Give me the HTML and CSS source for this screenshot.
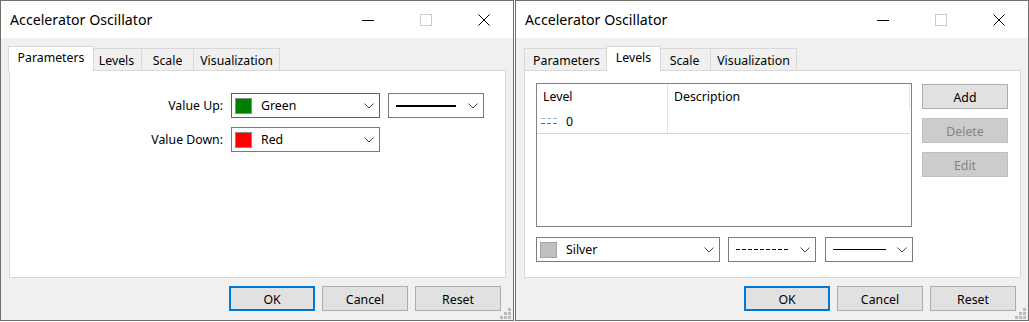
FILE: index.html
```html
<!DOCTYPE html>
<html>
<head>
<meta charset="utf-8">
<link rel="stylesheet" href="styles.css">
</head>
<body>
<div class="screen">
  <div class="dialog">
    <div class="titlebar">
      <span class="title">Accelerator Oscillator</span>
      <div class="caption">
        <span class="cbtn"><svg width="12" height="12" viewBox="0 0 12 12"><line x1="0" y1="6.5" x2="12" y2="6.5" stroke="#000" stroke-width="1"/></svg></span>
        <span class="cbtn"><svg width="12" height="12" viewBox="0 0 12 12"><rect x="0.5" y="0.5" width="11" height="11" fill="none" stroke="#cccccc" stroke-width="1"/></svg></span>
        <span class="cbtn"><svg width="12" height="12" viewBox="0 0 12 12"><path d="M0.5 0.5 L11.5 11.5 M11.5 0.5 L0.5 11.5" stroke="#000" stroke-width="1" fill="none"/></svg></span>
      </div>
    </div>
    <div class="body">
      <div class="tabs">
        <div class="tab t-params first active">Parameters</div>
        <div class="tab t-levels">Levels</div>
        <div class="tab t-scale">Scale</div>
        <div class="tab t-vis">Visualization</div>
      </div>
      <div class="panel">
        <div class="params">
          <label class="lbl">Value Up:</label>
          <div class="combo focus color-combo">
            <span class="swatch sw-green"></span>
            <span class="ctext">Green</span>
            <svg class="chev" width="10" height="6" viewBox="0 0 10 6"><polyline points="0.5,0.5 5,5 9.5,0.5" fill="none" stroke="#444" stroke-width="1"/></svg>
          </div>
          <div class="combo line-combo">
            <span class="line thick"></span>
            <svg class="chev" width="10" height="6" viewBox="0 0 10 6"><polyline points="0.5,0.5 5,5 9.5,0.5" fill="none" stroke="#444" stroke-width="1"/></svg>
          </div>
          <label class="lbl">Value Down:</label>
          <div class="combo color-combo">
            <span class="swatch sw-red"></span>
            <span class="ctext">Red</span>
            <svg class="chev" width="10" height="6" viewBox="0 0 10 6"><polyline points="0.5,0.5 5,5 9.5,0.5" fill="none" stroke="#444" stroke-width="1"/></svg>
          </div>
        </div>
      </div>
      <div class="footer">
        <button class="btn default">OK</button>
        <button class="btn">Cancel</button>
        <button class="btn">Reset</button>
      </div>
    </div>
    <svg class="grip" width="11" height="11" viewBox="0 0 11 11"><g fill="#bcbcbc"><rect x="8" y="0" width="3" height="3"/><rect x="4" y="4" width="3" height="3"/><rect x="8" y="4" width="3" height="3"/><rect x="0" y="8" width="3" height="3"/><rect x="4" y="8" width="3" height="3"/><rect x="8" y="8" width="3" height="3"/></g></svg>
  </div>

  <div class="dialog">
    <div class="titlebar">
      <span class="title">Accelerator Oscillator</span>
      <div class="caption">
        <span class="cbtn"><svg width="12" height="12" viewBox="0 0 12 12"><line x1="0" y1="6.5" x2="12" y2="6.5" stroke="#000" stroke-width="1"/></svg></span>
        <span class="cbtn"><svg width="12" height="12" viewBox="0 0 12 12"><rect x="0.5" y="0.5" width="11" height="11" fill="none" stroke="#cccccc" stroke-width="1"/></svg></span>
        <span class="cbtn"><svg width="12" height="12" viewBox="0 0 12 12"><path d="M0.5 0.5 L11.5 11.5 M11.5 0.5 L0.5 11.5" stroke="#000" stroke-width="1" fill="none"/></svg></span>
      </div>
    </div>
    <div class="body">
      <div class="tabs">
        <div class="tab t-params first">Parameters</div>
        <div class="tab t-levels active">Levels</div>
        <div class="tab t-scale">Scale</div>
        <div class="tab t-vis">Visualization</div>
      </div>
      <div class="panel levels">
        <div class="lv-top">
          <div class="list">
            <div class="grid">
              <div class="col col1">
                <div class="hcell">Level</div>
                <div class="rcell"><svg class="lvicon" width="17" height="8" viewBox="0 0 17 8"><g fill="#8dbbe8"><rect x="0" y="1" width="4" height="1"/><rect x="6" y="1" width="4" height="1"/><rect x="12" y="1" width="4" height="1"/></g><g fill="#2b7cd3"><rect x="0" y="6" width="4" height="1"/><rect x="6" y="6" width="4" height="1"/><rect x="12" y="6" width="4" height="1"/></g></svg><span class="lvval">0</span></div>
              </div>
              <div class="col col2">
                <div class="hcell hlast">Description</div>
                <div class="rcell"></div>
              </div>
            </div>
          </div>
          <div class="side">
            <button class="btn">Add</button>
            <button class="btn disabled">Delete</button>
            <button class="btn disabled">Edit</button>
          </div>
        </div>
        <div class="lv-bottom">
          <div class="combo color-combo silver-combo">
            <span class="swatch sw-silver"></span>
            <span class="ctext">Silver</span>
            <svg class="chev" width="10" height="6" viewBox="0 0 10 6"><polyline points="0.5,0.5 5,5 9.5,0.5" fill="none" stroke="#444" stroke-width="1"/></svg>
          </div>
          <div class="combo small-combo dash-combo">
            <span class="line dashed"></span>
            <svg class="chev" width="10" height="6" viewBox="0 0 10 6"><polyline points="0.5,0.5 5,5 9.5,0.5" fill="none" stroke="#444" stroke-width="1"/></svg>
          </div>
          <div class="combo small-combo solid-combo">
            <span class="line thin"></span>
            <svg class="chev" width="10" height="6" viewBox="0 0 10 6"><polyline points="0.5,0.5 5,5 9.5,0.5" fill="none" stroke="#444" stroke-width="1"/></svg>
          </div>
        </div>
      </div>
      <div class="footer">
        <button class="btn default">OK</button>
        <button class="btn">Cancel</button>
        <button class="btn">Reset</button>
      </div>
    </div>
    <svg class="grip" width="11" height="11" viewBox="0 0 11 11"><g fill="#bcbcbc"><rect x="8" y="0" width="3" height="3"/><rect x="4" y="4" width="3" height="3"/><rect x="8" y="4" width="3" height="3"/><rect x="0" y="8" width="3" height="3"/><rect x="4" y="8" width="3" height="3"/><rect x="8" y="8" width="3" height="3"/></g></svg>
  </div>
</div>
</body>
</html>
```

FILE: styles.css
```css
html, body {
  margin: 0;
  padding: 0;
  background: #ffffff;
}
body {
  font-family: "Noto Sans", "Open Sans", sans-serif;
  font-size: 12.3px;
  color: #000;
}
.screen {
  display: flex;
  gap: 1px;
  width: 1029px;
  height: 322px;
  overflow: hidden;
}
.dialog {
  position: relative;
  width: 514px;
  height: 321px;
  box-sizing: border-box;
  border: 1px solid #707070;
  background: #f0f0f0;
  display: flex;
  flex-direction: column;
  flex: none;
}
.titlebar {
  height: 37px;
  background: #ffffff;
  display: flex;
  align-items: center;
  flex: none;
}
.title {
  padding-left: 9px;
  font-size: 14.2px;
  line-height: 20px;
  margin-top: 1px;
}
.caption {
  margin-left: auto;
  display: flex;
  height: 37px;
}
.cbtn {
  width: 58px;
  height: 37px;
  display: flex;
  align-items: center;
  justify-content: center;
}
.cbtn svg {
  display: block;
  margin-top: 1px;
}
.body {
  flex: 1;
  padding: 8px 0 0 8px;
  display: flex;
  flex-direction: column;
}
.tabs {
  display: flex;
  align-items: flex-end;
  height: 24px;
  position: relative;
  z-index: 1;
}
.tab {
  box-sizing: border-box;
  height: 22px;
  border: 1px solid #d9d9d9;
  border-bottom: none;
  background: #f0f0f0;
  margin-right: -1px;
  display: flex;
  align-items: center;
  justify-content: center;
  line-height: 16px;
  padding-top: 2px;
}
.t-params { width: 85px; }
.t-levels { width: 51px; }
.t-scale { width: 53px; }
.t-vis { width: 87px; }
.tab.active {
  height: 25px;
  margin-bottom: -1px;
  background: #ffffff;
  position: relative;
  z-index: 2;
  margin-left: -2px;
  margin-right: -3px;
  padding-top: 0;
  padding-bottom: 3px;
}
.tab.first.active {
  margin-left: -1px;
  width: 86px;
}
.t-levels.active { width: 55px; }
.panel {
  box-sizing: border-box;
  width: 497px;
  height: 208px;
  border: 1px solid #d9d9d9;
  background: #ffffff;
}
.params {
  display: grid;
  grid-template-columns: 213px 149px 96px;
  grid-auto-rows: 25px;
  column-gap: 8px;
  row-gap: 9px;
  padding-top: 22px;
}
.lbl {
  text-align: right;
  align-self: center;
  line-height: 16px;
  padding-top: 1px;
}
.combo {
  box-sizing: border-box;
  height: 25px;
  border: 1px solid #7a7a7a;
  background: #ffffff;
  display: flex;
  align-items: center;
  padding: 0 5px 0 3px;
}
.combo.focus {
  border-color: #0078d7;
}
.swatch {
  box-sizing: border-box;
  width: 17px;
  height: 16px;
  border: 1px solid #8c8c8c;
  flex: none;
}
.sw-green { background: #008000; }
.sw-red { background: #ff0000; }
.sw-silver { background: #c0c0c0; border-color: #a6a6a6; }
.ctext {
  margin-left: 9px;
  line-height: 16px;
  padding-top: 1px;
}
.chev {
  margin-left: auto;
  display: block;
  flex: none;
}
.line-combo, .small-combo {
  padding-left: 7px;
}
.line {
  display: block;
  flex: none;
}
.line.thick {
  width: 60px;
  height: 2px;
  background: #000;
}
.line.thin {
  width: 53px;
  height: 1px;
  background: #000;
}
.line.dashed {
  width: 52px;
  height: 1px;
  background: repeating-linear-gradient(to right, #000 0, #000 4px, transparent 4px, transparent 6px);
}
.footer {
  display: flex;
  justify-content: flex-end;
  gap: 7px;
  padding-right: 12px;
  margin-top: 8px;
}
.btn {
  box-sizing: border-box;
  width: 86px;
  height: 25px;
  border: 1px solid #adadad;
  background: #e1e1e1;
  font-family: "Noto Sans", "Open Sans", sans-serif;
  font-size: 12.3px;
  color: #000;
  padding: 2px 0 0 0;
  margin: 0;
  line-height: 16px;
}
.btn.default {
  border: 2px solid #0078d7;
  padding-top: 2px;
}
.btn.disabled {
  background: #cccccc;
  border-color: #bfbfbf;
  color: #838383;
}
.grip {
  position: absolute;
  right: 2px;
  bottom: 1px;
  display: block;
}
.levels {
  padding: 12px 0 0 11px;
}
.lv-top {
  display: flex;
  align-items: flex-start;
}
.list {
  box-sizing: border-box;
  width: 376px;
  height: 144px;
  border: 1px solid #828282;
  background: #ffffff;
}
.grid {
  display: flex;
  width: 373px;
  border-bottom: 1px solid #d6d6d6;
}
.col1 {
  width: 130px;
  border-right: 1px solid #e2e2e2;
}
.col2 {
  flex: 1;
}
.hcell {
  height: 25px;
  display: flex;
  align-items: center;
  padding-left: 6px;
  line-height: 16px;
  padding-top: 1px;
  box-sizing: border-box;
}
.hlast {
  border-right: 1px solid #e8e8e8;
}
.rcell {
  height: 24px;
  display: flex;
  align-items: center;
  padding-left: 4px;
  line-height: 16px;
}
.lvicon {
  display: block;
  flex: none;
}
.lvval {
  margin-left: 8px;
  padding-top: 1px;
}
.side {
  display: flex;
  flex-direction: column;
  gap: 9px;
  margin-left: 10px;
  margin-top: 1px;
}
.lv-bottom {
  display: flex;
  margin-top: 10px;
}
.silver-combo { width: 184px; }
.dash-combo { width: 88px; margin-left: 8px; }
.solid-combo { width: 88px; margin-left: 9px; }
```
